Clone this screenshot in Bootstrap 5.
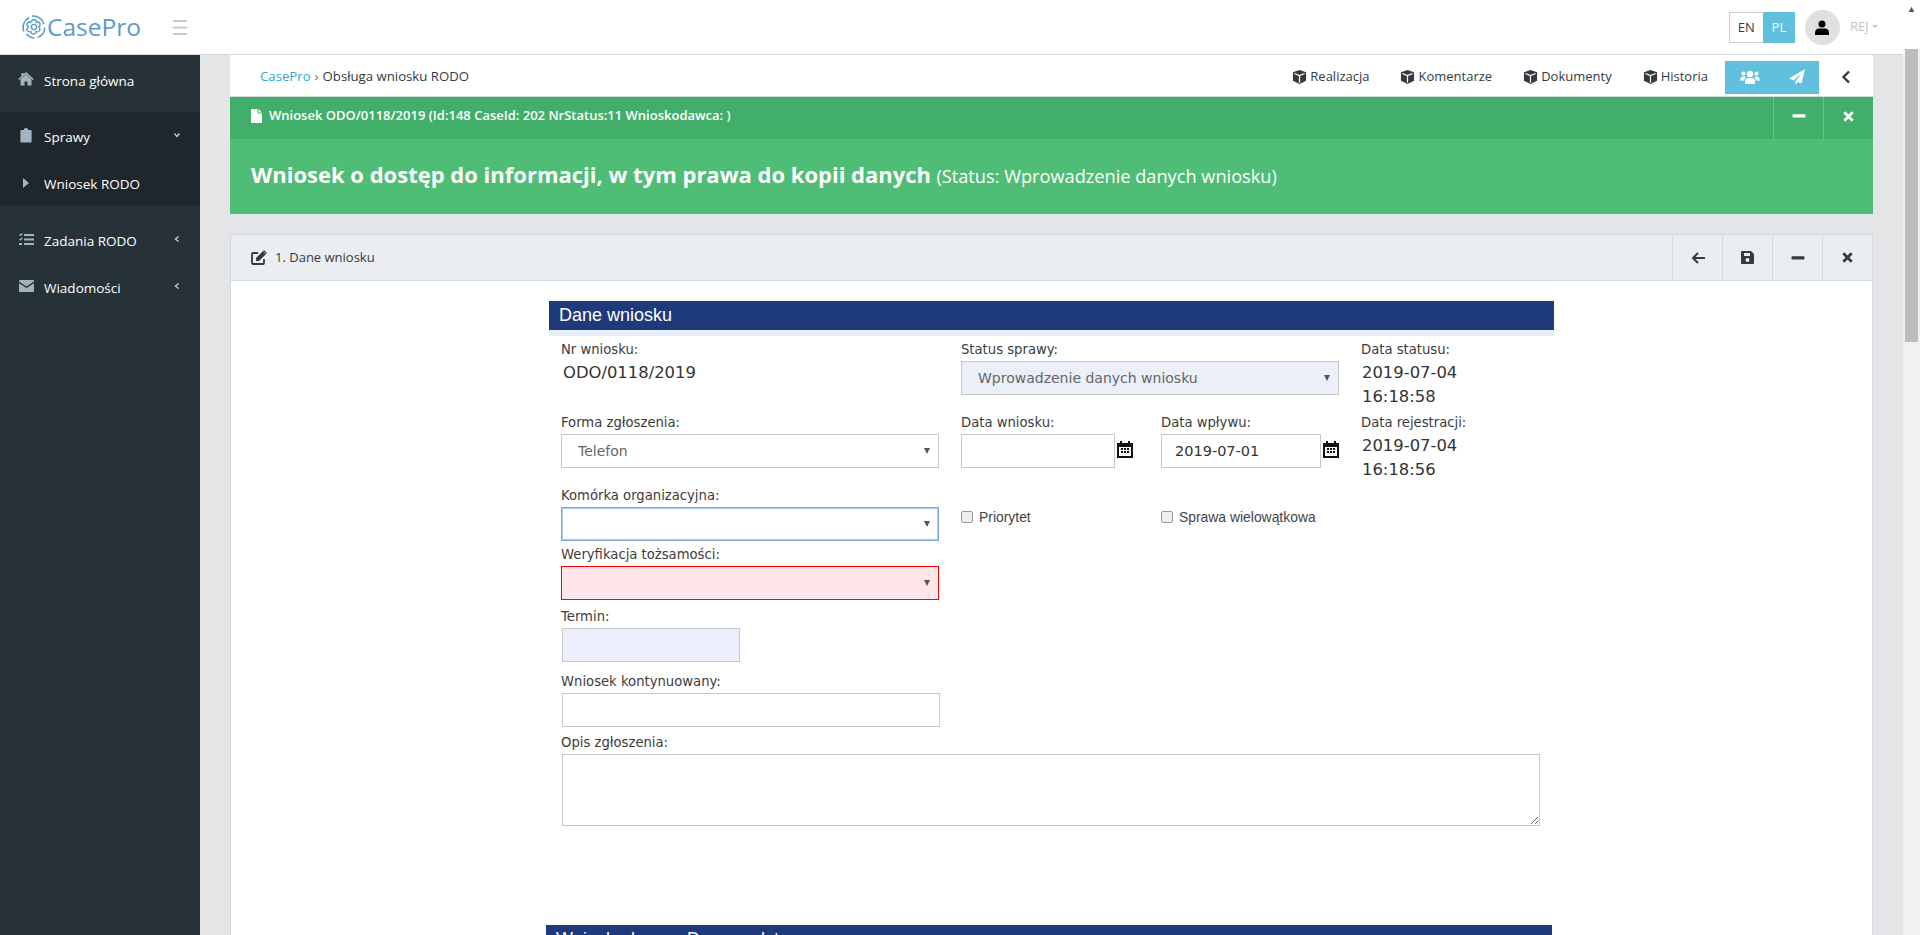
<!DOCTYPE html>
<html lang="pl">
<head>
    <meta charset="UTF-8">
    <title>CasePro</title>
    <meta name="viewport" content="width=device-width, initial-scale=1">
    <link href="https://cdn.jsdelivr.net/npm/bootstrap@5.3.2/dist/css/bootstrap.min.css" rel="stylesheet">
    <style>
        html, body { height: 100%; overflow: hidden; }
        body { font-family: "Open Sans", "Liberation Sans", sans-serif; font-size: 13px; color: #343a40; background: #e3e5e7; }
        .page-col { width: 1903px; height: 935px; }
        .fake-scroll { width: 17px; height: 935px; background: #f1f1f1; }
        .fake-arrow { height: 17px; font-size: 9px; line-height: 17px; color: #505050; text-align: center; background: #fff; }
        .fake-gap { height: 32px; background: #fff; }
        .fake-thumb { width: 13px; height: 293px; margin-left: 2px; background: #bdbdbd; }

        .top-bar { height: 55px; padding: 0; background: #fff; border-bottom: 1px solid #d5d9dd; flex-shrink: 0; }
        .logo-box { padding-left: 22px; color: #5b9bc8; font-size: 24.5px; line-height: 1; width: 173px; }
        .logo-box svg { margin-right: 1px; }
        .lang-box { height: 31px; margin-right: 10px; }
        .lang-box .btn { width: 35px; padding: 0; border-radius: 0; font-size: 13px; line-height: 27px; color: #343a40; background: #fff; border: 1px solid #ccc; }
        .lang-box .btn.on { width: 32px; color: #fff; background: #62c0df; border-color: #62c0df; }
        .avatar-dot { width: 35px; height: 35px; border-radius: 50%; background: #e0e0e0; }
        .user-name { margin: 0 25px 0 10px; font-size: 13px; color: #c4c4c4; white-space: nowrap; }

        .side-bar { width: 200px; background: #263238; color: #fff; }
        .side-link { height: 47px; padding-left: 44px; padding-right: 19px; font-size: 13.5px; color: #fff; text-decoration: none; position: relative; }
        .side-link svg.side-ico { position: absolute; left: 18px; top: 13px; color: #a3b3c0; }
        .side-link svg.ico-home { top: 17px; }
        .side-link svg.ico-board { left: 20px; top: 14px; }
        .side-link svg.ico-arrow { left: 23px; top: 17px; }
        .side-link svg.ico-tasks { left: 19px; top: 15px; }
        .side-link svg.ico-mail { left: 19px; top: 15px; }
        .side-link .turn { margin-left: auto; margin-bottom: 6px; color: #c6ced4; }
        .side-first { height: 57px; padding-bottom: 5px; }
        .side-group { height: 93px; padding-top: 2px; margin-bottom: 13px; background: #1f272d; }
        .side-sub { height: 44px; padding-top: 2px; }

        .main-area { padding: 0 30px; overflow: hidden; }
        .crumb-bar { height: 42px; padding: 3px 0 0 30px; background: #fff; border-bottom: 1px solid #d5d9dd; }
        .crumb-bar .breadcrumb { --bs-breadcrumb-margin-bottom: 0; --bs-breadcrumb-divider: "›"; --bs-breadcrumb-item-padding-x: 4px; font-size: 13.2px; }
        .crumb-bar .breadcrumb a { color: #29a9d8; text-decoration: none; }
        .crumb-bar .breadcrumb-item.active { color: #343a40; }
        .tab-link { color: #343a40; text-decoration: none; margin-right: 31px; gap: 3px; }
        .tab-last { margin-right: 17px; }
        .people-box { width: 94px; height: 33px; background: #62c0df; color: #fff; }
        .back-box { width: 54px; color: #343a40; }

        .green-panel { border-radius: 0; border: 0; background: #4fbd75; color: #fff; margin-bottom: 20px; }
        .green-head { height: 42px; padding: 0 0 0 21px; background: #41af6a; border: 0; border-radius: 0 !important; font-weight: 600; font-size: 13px; }
        .green-title { margin-bottom: 4px; gap: 7px; }
        .green-body { height: 75px; padding: 0 0 5px 21px; }
        .green-body b { font-size: 22px; font-weight: 700; }
        .green-body span { font-size: 18.2px; margin-left: 2px; }
        .head-btn { width: 50px; height: 100%; border-left: 1px solid #dfe3e7; }
        .green-head .head-btn { border-left-color: #6cc08d; color: #fff; }
        .green-head .head-btn svg { margin-bottom: 4px; }

        .form-panel { border-radius: 0; border: 1px solid #d5d9dd; border-bottom: 0; background: #fff; height: 800px; }
        .form-head { height: 46px; padding: 0 0 0 20px; background: #ebeef1; border-bottom: 1px solid #d5d9dd; border-radius: 0 !important; font-size: 13px; }
        .form-head .head-btn { border-left-color: #d5d9dd; color: #343a40; }
        .form-wrap { width: 1005px; margin: 20px 0 0 318px; }
        .blue-bar { height: 29px; padding-left: 10px; background: #1e3a7a; color: #fff; font-family: "Liberation Sans", Arial, sans-serif; font-size: 18px; line-height: 29px; }
        .blue-strip { height: 6px; background: #e9eff9; }
        .field-grid { display: grid; grid-template-columns: 378px 178px 178px 1fr; gap: 5px 22px; padding: 5px 0 0 12px; font-family: "DejaVu Sans", Verdana, sans-serif; }
        .field-label { display: block; height: 18px; margin-bottom: 2px; font-size: 13.2px; line-height: 18px; color: #3c3c3c; white-space: nowrap; }
        .field-text { padding-left: 1px; font-size: 16.4px; line-height: 24px; color: #333; }
        .field-text.shift { padding-left: 2px; }
        .field-line { display: block; height: 34px; padding: 0 16px; font-family: "DejaVu Sans", Verdana, sans-serif; font-size: 14px; color: #666; border: 1px solid #c8c8c8; border-radius: 0; background-color: #fff; box-shadow: none; }
        select.field-line { background-image: url("data:image/svg+xml,%3Csvg xmlns='http://www.w3.org/2000/svg' viewBox='0 0 8 8'%3E%3Cpath fill='%23555' d='M1 1h6L4 7z'/%3E%3C/svg%3E"); background-position: right 7px center; background-size: 8px 8px; }
        .fill-status { background-color: #ebeff8; }
        .fill-focus { border-color: #7fa8e8; box-shadow: 0 0 0 1px #a9c6f0 inset; }
        .fill-error { width: 378px; background-color: #ffe6ea; border-color: #f00; }
        .fill-term { width: 178px; margin-left: 1px; background-color: #eeeffd; }
        .fill-wide { width: 378px; margin-left: 1px; }
        .fill-area { width: 978px; height: 72px; margin-left: 1px; }
        .date-row { gap: 2px; }
        .date-row input { width: 154px; }
        .date-row.wide input { width: 160px; }
        .date-row input.field-line { padding: 0 13px; font-size: 14.5px; color: #333; }
        .date-row svg { flex-shrink: 0; margin-bottom: 5px; }
        .span-two { grid-column: 2 / span 2; }
        .span-all { grid-column: 1 / -1; }
        .tick-cell { padding-top: 20px; }
        .tick-row { font-family: "Liberation Sans", Arial, sans-serif; font-size: 13.9px; color: #444; gap: 6px; }
        .tick-row .form-check-input { width: 12px; height: 12px; margin: 0; border-color: #999; border-radius: 2px; background-color: #eee; }
        .drop-3 { margin-top: 3px; }
        .drop-6 { margin-top: 6px; }
        .drop-2 { margin-top: 2px; }
        .blue-next { width: 1006px; margin: 99px 0 0 -3px; }
    </style>
</head>
<body class="d-flex">
    <svg width="0" height="0" class="position-absolute">
        <symbol id="i-cube" viewBox="0 0 16 16"><path fill="#343a40" d="M8 .5 15 3v9l-7 3.5L1 12V3z"/><path fill="none" stroke="#fff" stroke-width="1.3" d="M2.5 4.2 8 6.5l5.500-2.300M8 6.500v7.500"/></symbol>
        <symbol id="i-minus" viewBox="0 0 14 14"><rect x="0.500" y="5.200" width="13" height="3.400" rx=".8" fill="currentColor"/></symbol>
        <symbol id="i-close" viewBox="0 0 14 14"><path fill="none" stroke="currentColor" stroke-width="3" d="M2.500 2.500l9 9M11.500 2.500l-9 9"/></symbol>
        <symbol id="i-cal" viewBox="0 0 16 18"><path fill="#111" fill-rule="evenodd" d="M0 3h3V1h2v2h6V1h2v2h3v15H0zM2 7v9h12V7z"/><path fill="#111" d="M4 8h2v2H4zM7 8h2v2H7zM10 8h2v2h-2zM4 11h2v2H4zM7 11h2v2H7zM10 11h2v2h-2z"/></symbol>
        <symbol id="i-caret" viewBox="0 0 8 8"><path fill="none" stroke="currentColor" stroke-width="1.400" d="M5.500 1.500 2.500 4l3 2.500"/></symbol>
    </svg>

    <div class="page-col d-flex flex-column">
        <nav class="navbar top-bar flex-nowrap">
            <a class="logo-box d-flex align-items-center text-decoration-none" href="#">
                <svg width="24" height="24" viewBox="0 0 24 24" fill="none" stroke="#5b9bc8">
                    <path stroke-width="1.600" d="M2 16.500A11 11 0 0 1 7 2.500M10 1.100a11 11 0 0 1 12 8M22.800 12.500a11 11 0 0 1-7 10M12.500 23a11 11 0 0 1-8-4"/>
                    <circle cx="12" cy="12" r="2.600" stroke-width="1.400"/>
                    <path stroke-width="1.400" d="M12 4.500c2 0 2.500 2 2.300 2.800 1.500-.8 3.300.2 3.700 1.400.5 1.600-.7 2.700-1.400 3.300.9.700 1.800 2 1 3.500-.8 1.400-2.600 1.500-3.500 1-.1 1-1 2.500-2.600 2.500s-2.500-1.500-2.600-2.500c-.9.500-2.700.4-3.500-1-.8-1.500.1-2.800 1-3.500-.7-.6-1.900-1.700-1.400-3.300.4-1.200 2.200-2.200 3.700-1.400C9.500 6.500 10 4.500 12 4.500z"/>
                </svg>
                <span>CasePro</span>
            </a>
            <svg width="14" height="15" viewBox="0 0 14 15"><path stroke="#c9c9c9" stroke-width="2" d="M0 1h14M0 7.500h14M0 14h14"/></svg>
            <div class="ms-auto d-flex align-items-center">
                <div class="btn-group lang-box">
                    <button type="button" class="btn">EN</button>
                    <button type="button" class="btn on">PL</button>
                </div>
                <div class="avatar-dot d-flex align-items-center justify-content-center">
                    <svg width="14" height="15" viewBox="0 0 14 15"><circle cx="7" cy="4" r="3.500"/><path d="M0 15v-2.500C0 10 2 8.500 4 8.500h6c2 0 4 1.500 4 4V15z"/></svg>
                </div>
                <span class="user-name">REJ <span class="dropdown-toggle"></span></span>
            </div>
        </nav>

        <div class="d-flex flex-grow-1 overflow-hidden">
            <aside class="side-bar flex-shrink-0">
                <a href="#" class="side-link side-first d-flex align-items-center">
                    <svg class="side-ico ico-home" width="16" height="14" viewBox="0 0 16 14" fill="currentColor"><path d="M8 2.300 2.500 7.200V13a.6.600 0 0 0 .6.600h3.400V9.500h3V13.600h3.400a.6.600 0 0 0 .6-.6V7.200zM8 0 5.500 2.200V1H3.500v3L.2 6.900l.9 1L8 1.900l6.900 6 .9-1z"/></svg>
                    Strona główna
                </a>
                <div class="side-group">
                    <a href="#" class="side-link d-flex align-items-center">
                        <svg class="side-ico ico-board" width="12" height="15" viewBox="0 0 12 16" fill="currentColor"><path d="M1 2h2.500a2.500 2 0 0 1 5 0H11a1 1 0 0 1 1 1v11.500a1 1 0 0 1-1 1H1a1 1 0 0 1-1-1V3a1 1 0 0 1 1-1z"/></svg>
                        Sprawy
                        <svg class="turn" width="8" height="8" viewBox="0 0 8 8"><path fill="none" stroke="currentColor" stroke-width="1.400" d="M1.500 2.500 4 5.500l2.500-3"/></svg>
                    </a>
                    <a href="#" class="side-link side-sub d-flex align-items-center">
                        <svg class="side-ico ico-arrow" width="6" height="10" viewBox="0 0 6 10" fill="currentColor"><path d="M0 0l6 5-6 5z"/></svg>
                        Wniosek RODO
                    </a>
                </div>
                <a href="#" class="side-link d-flex align-items-center">
                    <svg class="side-ico ico-tasks" width="15" height="13" viewBox="0 0 15 13" fill="currentColor"><path d="M5 1h10v2H5zM5 5.500h10v2H5zM5 10h10v2H5zM0 10h3v2H0z"/><path fill="none" stroke="currentColor" stroke-width="1.200" d="M.5 1.500l1 1 1.800-2M.5 6l1 1 1.800-2"/></svg>
                    Zadania RODO
                    <svg class="turn" width="8" height="8"><use href="#i-caret"/></svg>
                </a>
                <a href="#" class="side-link d-flex align-items-center">
                    <svg class="side-ico ico-mail" width="15" height="12" viewBox="0 0 15 12" fill="currentColor"><path d="M1 0h13a1 1 0 0 1 1 1v.6L7.500 6.500 0 1.600V1a1 1 0 0 1 1-1zM0 3.200l7.500 4.900L15 3.200V11a1 1 0 0 1-1 1H1a1 1 0 0 1-1-1z"/></svg>
                    Wiadomości
                    <svg class="turn" width="8" height="8"><use href="#i-caret"/></svg>
                </a>
            </aside>

            <main class="main-area flex-grow-1">
                <div class="crumb-bar d-flex align-items-center">
                    <ol class="breadcrumb">
                        <li class="breadcrumb-item"><a href="#">CasePro</a></li>
                        <li class="breadcrumb-item active">Obsługa wniosku RODO</li>
                    </ol>
                    <div class="ms-auto d-flex align-items-center">
                        <a href="#" class="tab-link d-flex align-items-center"><svg width="15" height="16"><use href="#i-cube"/></svg>Realizacja</a>
                        <a href="#" class="tab-link d-flex align-items-center"><svg width="15" height="16"><use href="#i-cube"/></svg>Komentarze</a>
                        <a href="#" class="tab-link d-flex align-items-center"><svg width="15" height="16"><use href="#i-cube"/></svg>Dokumenty</a>
                        <a href="#" class="tab-link tab-last d-flex align-items-center"><svg width="15" height="16"><use href="#i-cube"/></svg>Historia</a>
                        <div class="people-box d-flex align-items-center justify-content-around">
                            <svg width="20" height="14" viewBox="0 0 20 14" fill="currentColor"><circle cx="10" cy="4" r="3.200"/><circle cx="3.500" cy="3.500" r="2"/><circle cx="16.500" cy="3.500" r="2"/><path d="M5 14v-3c0-2 1.500-3 3-3h4c1.500 0 3 1 3 3v3zM0 10.500C0 8 1.500 6.500 3 6.500h2.500L4 10.500zM20 10.500C20 8 18.500 6.500 17 6.500h-2.500l1.500 4z"/></svg>
                            <svg width="16" height="16" viewBox="0 0 16 16" fill="currentColor"><path d="M16 0 0 9.500l4.500 2L13 4 6.500 12.300V16L9 13l3.500 1.500z"/></svg>
                        </div>
                        <div class="back-box d-flex justify-content-center">
                            <svg width="10" height="14" viewBox="0 0 10 14"><path fill="none" stroke="currentColor" stroke-width="2.400" d="M8 1.500 2.500 7 8 12.500"/></svg>
                        </div>
                    </div>
                </div>

                <div class="card green-panel">
                    <div class="card-header green-head d-flex align-items-center">
                        <div class="green-title d-flex align-items-center">
                            <svg width="11" height="14" viewBox="0 0 11 14" fill="#fff"><path d="M0 0h6.500v4.500H11V14H0zM7.500 0 11 3.500H7.500z"/></svg>
                            Wniosek ODO/0118/2019 (Id:148 CaseId: 202 NrStatus:11 Wnioskodawca: )
                        </div>
                        <div class="head-btn ms-auto d-flex align-items-center justify-content-center"><svg width="14" height="14"><use href="#i-minus"/></svg></div>
                        <div class="head-btn d-flex align-items-center justify-content-center"><svg width="13" height="13"><use href="#i-close"/></svg></div>
                    </div>
                    <div class="card-body green-body d-flex align-items-center">
                        <div><b>Wniosek o dostęp do informacji, w tym prawa do kopii danych</b> <span>(Status: Wprowadzenie danych wniosku)</span></div>
                    </div>
                </div>

                <div class="card form-panel">
                    <div class="card-header form-head d-flex align-items-center">
                        <svg width="16" height="15" viewBox="0 0 16 15" class="me-2"><path fill="none" stroke="currentColor" stroke-width="1.800" d="M13 9v4a1 1 0 0 1-1 1H2a1 1 0 0 1-1-1V4a1 1 0 0 1 1-1h5"/><path fill="currentColor" d="M5 8 12 1l3 3-7 7H5zM13 0l3 3-.7.700-3-3z"/></svg>
                        <span>1. Dane wniosku</span>
                        <div class="head-btn ms-auto d-flex align-items-center justify-content-center">
                            <svg width="14" height="14" viewBox="0 0 14 14"><path fill="none" stroke="currentColor" stroke-width="2" d="M7 2 2 7l5 5M2 7h12"/></svg>
                        </div>
                        <div class="head-btn d-flex align-items-center justify-content-center">
                            <svg width="13" height="13" viewBox="0 0 13 13"><path fill="currentColor" fill-rule="evenodd" d="M1 0h9l3 3v9a1 1 0 0 1-1 1H1a1 1 0 0 1-1-1V1a1 1 0 0 1 1-1zM3 2v3h6V2zM6.500 7a2 2 0 1 0 0 4 2 2 0 0 0 0-4z"/></svg>
                        </div>
                        <div class="head-btn d-flex align-items-center justify-content-center"><svg width="14" height="14"><use href="#i-minus"/></svg></div>
                        <div class="head-btn d-flex align-items-center justify-content-center"><svg width="13" height="13"><use href="#i-close"/></svg></div>
                    </div>
                    <div class="form-wrap">
                        <div class="blue-bar">Dane wniosku</div>
                        <div class="blue-strip"></div>
                        <form class="field-grid">
                            <div>
                                <label class="field-label">Nr wniosku:</label>
                                <div class="field-text shift">ODO/0118/2019</div>
                            </div>
                            <div class="span-two">
                                <label class="field-label">Status sprawy:</label>
                                <select class="form-select field-line fill-status"><option>Wprowadzenie danych wniosku</option></select>
                            </div>
                            <div>
                                <label class="field-label">Data statusu:</label>
                                <div class="field-text">2019-07-04<br>16:18:58</div>
                            </div>

                            <div>
                                <label class="field-label">Forma zgłoszenia:</label>
                                <select class="form-select field-line"><option>Telefon</option></select>
                            </div>
                            <div>
                                <label class="field-label">Data wniosku:</label>
                                <div class="date-row d-flex align-items-center"><input type="text" class="form-control field-line"><svg width="16" height="18"><use href="#i-cal"/></svg></div>
                            </div>
                            <div>
                                <label class="field-label">Data wpływu:</label>
                                <div class="date-row wide d-flex align-items-center"><input type="text" class="form-control field-line" value="2019-07-01"><svg width="16" height="18"><use href="#i-cal"/></svg></div>
                            </div>
                            <div>
                                <label class="field-label">Data rejestracji:</label>
                                <div class="field-text">2019-07-04<br>16:18:56</div>
                            </div>

                            <div>
                                <label class="field-label">Komórka organizacyjna:</label>
                                <select class="form-select field-line fill-focus"><option></option></select>
                            </div>
                            <div class="tick-cell">
                                <label class="tick-row d-flex align-items-center"><input type="checkbox" class="form-check-input">Priorytet</label>
                            </div>
                            <div class="tick-cell">
                                <label class="tick-row d-flex align-items-center"><input type="checkbox" class="form-check-input">Sprawa wielowątkowa</label>
                            </div>
                            <div></div>

                            <div class="span-all">
                                <label class="field-label">Weryfikacja tożsamości:</label>
                                <select class="form-select field-line fill-error"><option></option></select>
                            </div>
                            <div class="span-all drop-3">
                                <label class="field-label">Termin:</label>
                                <input type="text" class="form-control field-line fill-term">
                            </div>
                            <div class="span-all drop-6">
                                <label class="field-label">Wniosek kontynuowany:</label>
                                <input type="text" class="form-control field-line fill-wide">
                            </div>
                            <div class="span-all drop-2">
                                <label class="field-label">Opis zgłoszenia:</label>
                                <textarea class="form-control field-line fill-area"></textarea>
                            </div>
                        </form>
                        <div class="blue-next">
                            <div class="blue-bar">Wnioskodawca. Dane podstawowe</div>
                        </div>
                    </div>
                </div>
            </main>
        </div>
    </div>

    <div class="fake-scroll flex-shrink-0">
        <div class="fake-arrow">▲</div>
        <div class="fake-gap"></div>
        <div class="fake-thumb"></div>
    </div>

    <script src="https://cdn.jsdelivr.net/npm/bootstrap@5.3.2/dist/js/bootstrap.bundle.min.js"></script>
</body>
</html>
